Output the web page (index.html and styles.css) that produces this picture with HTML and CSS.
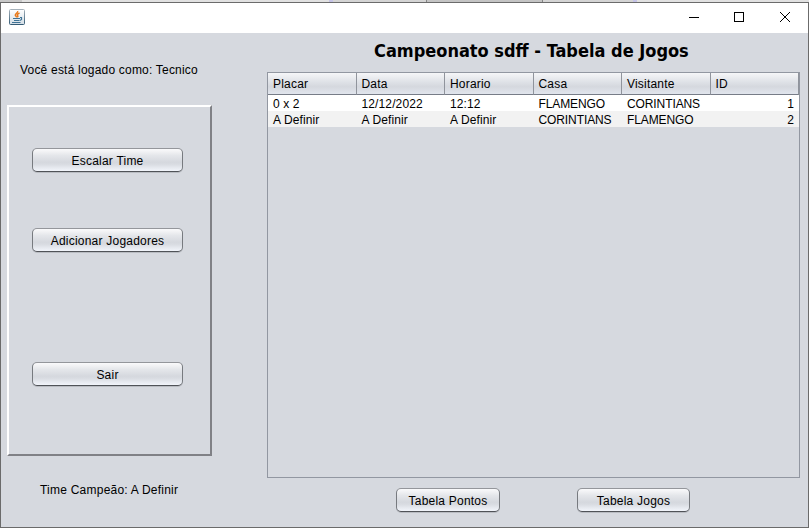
FILE: index.html
```html
<!DOCTYPE html>
<html lang="pt-BR">
<head>
<meta charset="utf-8">
<title>Tabela de Jogos</title>
<link rel="stylesheet" href="styles.css">
</head>
<body>
<div class="backdrop"><i class="tab first"></i><i class="tab plain"></i><i class="edge"></i><i class="tab second"></i><i class="tab active"></i><i class="tab third"></i><i class="edge"></i><i class="tab rest"></i></div>
<div class="window">
  <header class="titlebar">
    <svg class="java" width="16" height="16" viewBox="0 0 16 16">
      <defs><linearGradient id="tile" x1="0" y1="0" x2="0" y2="1"><stop offset="0" stop-color="#fff"/><stop offset="1" stop-color="#d3dde5"/></linearGradient>
      <linearGradient id="rim" x1="0" y1="0" x2="0" y2="1"><stop offset="0" stop-color="#a5b1ba"/><stop offset="1" stop-color="#345b75"/></linearGradient></defs>
      <rect x=".5" y=".5" width="15" height="15" rx="1" fill="url(#tile)" stroke="url(#rim)"/>
      <path d="M8.700 2C9.200 4 5.800 4.700 6.300 6.400L7.800 8.300M10.500 4C8 5.200 7.800 6 9 7.200L8.300 8.400" fill="none" stroke="#e8791a" stroke-width="1.400"/>
      <path d="M4 9.500h7M5 11.500h5.500M3 13.500h8.500M11 8.500h1.500v2L11 11.500" fill="none" stroke="#3f7396" stroke-width="1.200"/>
    </svg>
    <svg class="controls" width="104" height="12" viewBox="0 0 104 12" fill="none" stroke="#000" shape-rendering="crispEdges">
      <path d="M0 6.500h10M45.500 1.500h9v9h-9z"/>
      <path d="M91 1l10 10M101 1l-10 10" shape-rendering="auto"/>
    </svg>
  </header>
  <main class="content">
    <aside class="side">
      <p class="login">Você está logado como: Tecnico</p>
      <nav class="panel">
        <button class="btn">Escalar Time</button>
        <button class="btn">Adicionar Jogadores</button>
        <button class="btn exit">Sair</button>
      </nav>
      <p class="champion">Time Campeão: A Definir</p>
    </aside>
    <section class="games">
      <h1>Campeonato sdff - Tabela de Jogos</h1>
      <div class="tablebox">
        <table>
          <thead><tr><th>Placar</th><th>Data</th><th>Horario</th><th>Casa</th><th>Visitante</th><th>ID</th></tr></thead>
          <tbody>
            <tr><td>0 x 2</td><td>12/12/2022</td><td>12:12</td><td class="caps">FLAMENGO</td><td class="caps">CORINTIANS</td><td class="num">1</td></tr>
            <tr><td>A Definir</td><td>A Definir</td><td>A Definir</td><td class="caps">CORINTIANS</td><td class="caps">FLAMENGO</td><td class="num">2</td></tr>
          </tbody>
        </table>
      </div>
      <footer class="actions"><button class="btn points">Tabela Pontos</button><button class="btn matches">Tabela Jogos</button></footer>
    </section>
  </main>
</div>
</body>
</html>
```
FILE: styles.css
```css
* { box-sizing: border-box; }
body {
  margin: 0;
  width: 809px;
  height: 528px;
  overflow: hidden;
  font: 12px/14px "Liberation Sans", Arial, sans-serif;
  color: #000;
}
p, h1 { margin: 0; white-space: nowrap; }
.backdrop { display: flex; height: 2px; background: #e1e1e1; }
.tab { background: #d4d4d4; }
.first { width: 22px; background: #c8c8c8; }
.plain { width: 307px; background: #e1e1e1; }
.edge { width: 4px; background: #c5c3e6; }
.second { width: 93px; }
.active { width: 117px; background: #c4c4c4; border: solid #858585; border-width: 0 1px; }
.third { width: 90px; }
.rest { flex: 1; background: #e1e1e1; }
.window {
  height: 526px;
  border: 1px solid #6b6b6b;
  background: #d6d9df;
  display: flex;
  flex-direction: column;
}
.titlebar {
  height: 30px;
  background: #fff;
  display: flex;
  justify-content: space-between;
  padding: 6px 15px 0 8px;
}
.controls { margin-top: 2px; }
.content { flex: 1; display: flex; }
.side { width: 266px; padding-left: 6px; }
.login { margin: 30px 0 28px 13px; letter-spacing: .2px; }
.panel {
  width: 205px;
  height: 351px;
  border: 2px solid;
  border-color: #fff #808186 #808186 #fff;
  padding: 41px 0 0 23px;
  display: flex;
  flex-direction: column;
  align-items: flex-start;
  gap: 56px;
}
.btn {
  width: 151px;
  height: 24px;
  padding: 2px 0 0;
  border: 1px solid;
  border-color: #94969b #777a7f #505358;
  border-radius: 5px;
  background: linear-gradient(#fafafb 0%, #e4e6ea 30%, #d5d8de 60%, #d9dce2 70%, #f2f5fb 100%);
  box-shadow: 0 1px 0 #b9bcc2;
  font: inherit;
  letter-spacing: .22px;
  color: #000;
}
.exit { margin-top: 54px; }
.champion { margin: 27px 0 0 33px; letter-spacing: .23px; }
.games { width: 533px; }
h1 {
  font: bold 18px/22px "DejaVu Sans Condensed", "DejaVu Sans", sans-serif;
  padding: 7px 0 0 107px;
  height: 39px;
}
.tablebox { height: 406px; border: 1px solid #9297a1; }
table { width: 531px; table-layout: fixed; border-collapse: separate; border-spacing: 0; }
th, td { padding: 0 5px; text-align: left; font-weight: normal; white-space: nowrap; }
th {
  height: 22px;
  border-right: 1px solid #90949c;
  border-bottom: 1px solid #777c87;
  background: linear-gradient(#f5f6f8 0%, #e0e3e8 40%, #d5d8de 65%, #e1e5ed 100%);
  letter-spacing: .2px;
}
td { height: 16px; padding-top: 2px; background: #fff; letter-spacing: .12px; }
tr:nth-child(2) td { background: #f2f2f2; }
td.caps { letter-spacing: -.1px; }
td.num { text-align: right; }
.actions { display: flex; padding: 10px 0 0 129px; gap: 77px; }
.points { width: 104px; }
.matches { width: 113px; }
```
